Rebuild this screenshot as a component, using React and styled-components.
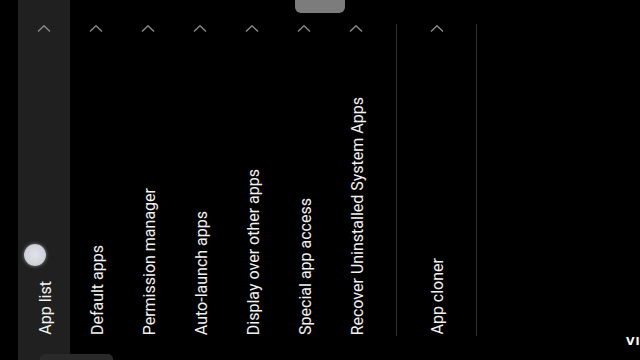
import React from "react";
import styled, { createGlobalStyle } from "styled-components";

const Global = createGlobalStyle`
  html, body { margin: 0; padding: 0; background: #000; }
  body { width: 640px; height: 360px; overflow: hidden; font-family: Roboto, "Noto Sans", Arial, sans-serif; }
`;

const Screen = styled.div`
  position: relative;
  width: 640px;
  height: 360px;
  background: #000;
  overflow: hidden;
  display: flex;
  padding-left: 18px;
  box-sizing: border-box;
`;

const Column = styled.div`
  width: ${(p) => p.$w || 52}px;
  height: ${(p) => (p.$section ? 312 : 360)}px;
  margin-top: ${(p) => (p.$section ? 24 : 0)}px;
  box-sizing: border-box;
  display: flex;
  flex-direction: column;
  align-items: center;
  justify-content: space-between;
  padding: ${(p) => (p.$section ? "1px 0 0" : "25px 0 25px")};
  background: ${(p) => (p.$active ? "#202020" : "transparent")};
  border-left: ${(p) => (p.$section ? "1px solid #2e2e2e" : "none")};
  border-right: ${(p) => (p.$section ? "1px solid #2e2e2e" : "none")};
  margin-left: ${(p) => p.$ml || 0}px;
`;

const Label = styled.span`
  writing-mode: vertical-rl;
  transform: rotate(180deg);
  font-size: 16px;
  line-height: 19px;
  color: #f2f2f2;
  white-space: nowrap;
  margin-left: 2px;
  margin-bottom: ${(p) => (p.$section ? 1 : 0)}px;
`;

const Chevron = styled.svg`
  width: 14px;
  height: 7px;
  display: block;
  flex-shrink: 0;
`;

const Touch = styled.div`
  position: absolute;
  left: 24px;
  top: 244px;
  width: 22px;
  height: 22px;
  border-radius: 50%;
  background: radial-gradient(circle, #e2e2ea 0%, #d2d2da 60%, #a8a8b0 100%);
  box-shadow: 0 0 3px 1px rgba(200, 200, 210, 0.35);
`;

const TopPill = styled.div`
  position: absolute;
  left: 295px;
  top: -6px;
  width: 50px;
  height: 19px;
  border-radius: 6px;
  background: #7c7c7c;
`;

const BottomBar = styled.div`
  position: absolute;
  left: 40px;
  top: 354px;
  width: 73px;
  height: 12px;
  border-radius: 5px;
  background: #2a2a2a;
`;

const Watermark = styled.div`
  position: absolute;
  left: 626px;
  top: 335px;
  font-family: "DejaVu Sans", sans-serif;
  font-weight: bold;
  font-size: 11px;
  letter-spacing: 1px;
  color: #fff;
`;

const Up = () => (
  <Chevron viewBox="0 0 14 7">
    <polyline points="1,6.5 7,0.8 13,6.5" fill="none" stroke="#8c8c8c" strokeWidth="1.4" />
  </Chevron>
);

const items = [
  "App list",
  "Default apps",
  "Permission manager",
  "Auto-launch apps",
  "Display over other apps",
  "Special app access",
  "Recover Uninstalled System Apps",
];

export default function App() {
  return (
    <>
      <Global />
      <Screen>
        {items.map((t, i) => (
          <Column key={t} $active={i === 0}>
            <Up />
            <Label>{t}</Label>
          </Column>
        ))}
        <Column $section $w={81} $ml={14}>
          <Up />
          <Label $section>App cloner</Label>
        </Column>
        <TopPill />
        <Touch />
        <BottomBar />
        <Watermark>VI</Watermark>
      </Screen>
    </>
  );
}
